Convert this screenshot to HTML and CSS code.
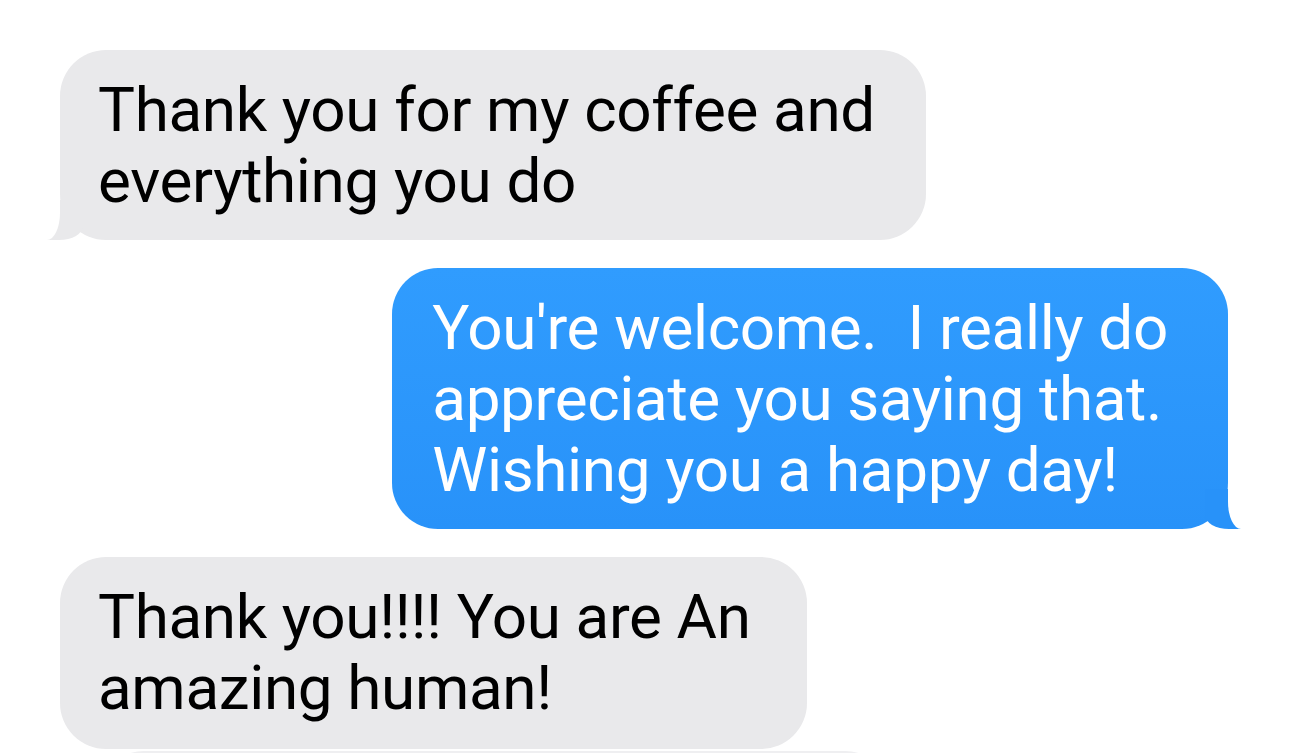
FILE: index.html
```html
<!DOCTYPE html>
<html>
<head>
<meta charset="utf-8">
<link rel="stylesheet" href="styles.css">
</head>
<body>
<div class="thread">
  <div class="bubble them tail">Thank you for my coffee and<br>everything you do</div>
  <div class="bubble me tail">You're welcome.&nbsp; I really do<br>appreciate you saying that.<br>Wishing you a happy day!</div>
  <div class="bubble them wide">Thank you!!!! You are An<br>amazing human!</div>
  <div class="bubble them next">&nbsp;</div>
</div>
</body>
</html>
```
FILE: styles.css
```css
html, body {
  margin: 0;
  padding: 0;
  background: #ffffff;
  overflow: hidden;
  height: 753px;
}
.thread {
  display: flex;
  flex-direction: column;
  gap: 28px;
  padding: 50px 62px 0 60px;
  font-family: Roboto, "Liberation Sans", sans-serif;
  font-size: 62px;
  line-height: 71px;
  letter-spacing: -0.35px;
}
.bubble {
  position: relative;
  width: fit-content;
  padding: 24px 51px 24px 38px;
  border-radius: 46px;
}
.them {
  align-self: flex-start;
  background: #e9e9eb;
  color: #000000;
}
.wide {
  padding-right: 56px;
  padding-bottom: 26px;
}
.me {
  align-self: flex-end;
  background: linear-gradient(#309cfe, #2892f9);
  color: #ffffff;
  padding-left: 40px;
  padding-right: 60px;
}
.them.tail::before {
  content: "";
  position: absolute;
  bottom: 0;
  left: -17px;
  width: 40px;
  height: 40px;
  background: #e9e9eb;
  border-bottom-right-radius: 24px 14px;
}
.them.tail::after {
  content: "";
  position: absolute;
  bottom: 0;
  left: -30px;
  width: 30px;
  height: 44px;
  background: #ffffff;
  border-bottom-right-radius: 13px 27px;
}
.me.tail::before {
  content: "";
  position: absolute;
  bottom: 0;
  right: -17px;
  width: 40px;
  height: 40px;
  background: #2892f9;
  border-bottom-left-radius: 24px 14px;
}
.me.tail::after {
  content: "";
  position: absolute;
  bottom: 0;
  right: -30px;
  width: 30px;
  height: 44px;
  background: #ffffff;
  border-bottom-left-radius: 13px 27px;
}
.next {
  width: 793px;
  margin-top: -26px;
  height: 140px;
  padding: 0;
  margin-left: 38px;
  background: #efeff1;
}
```
